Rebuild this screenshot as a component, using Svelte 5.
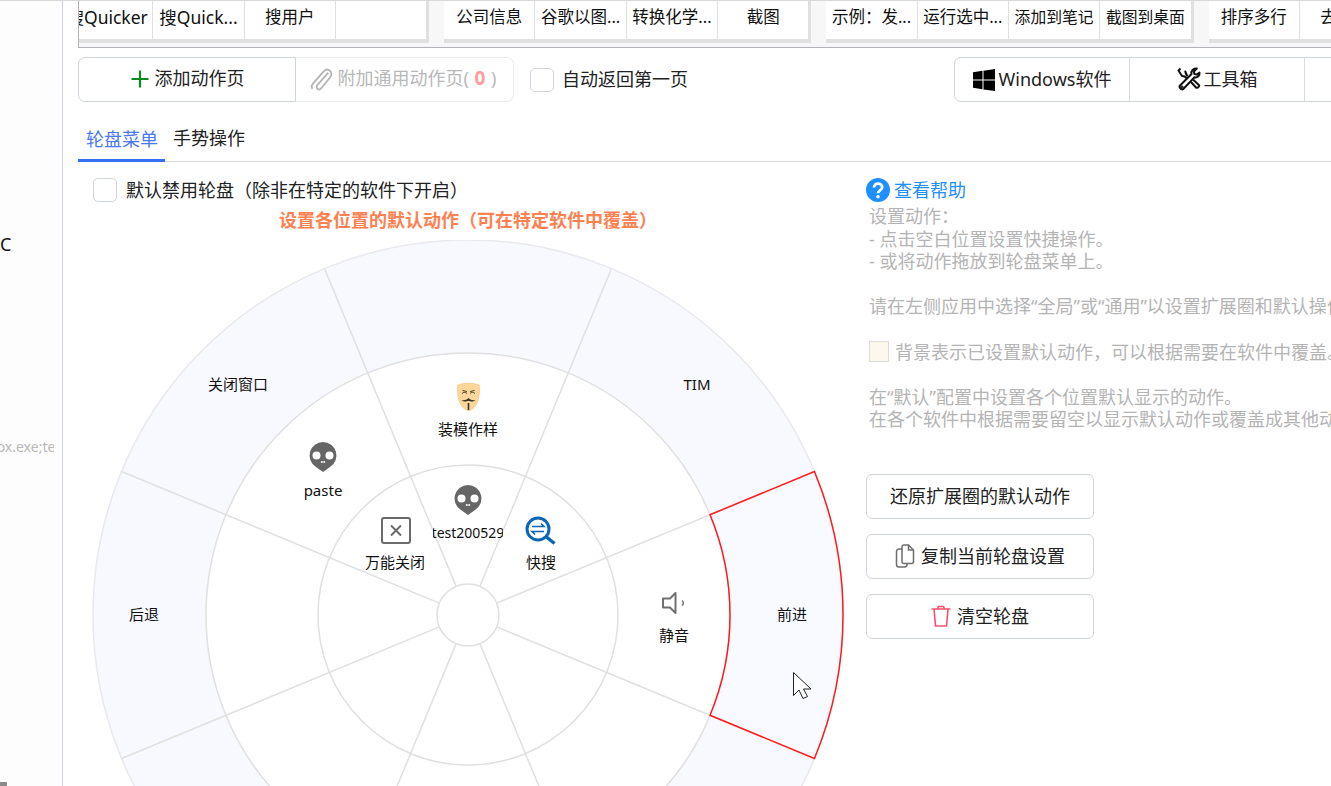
<script lang="ts">
  const groups = [
    ['搜Quicker', '搜Quick...', '搜用户', ''],
    ['公司信息', '谷歌以图...', '转换化学...', '截图'],
    ['示例：发...', '运行选中...', '添加到笔记', '截图到桌面'],
    ['排序多行', '去空行', '', '']
  ];

  const cx = 380;
  const cy = 375;
  const R = [31, 150, 262, 375];

  const polar = (r: number, deg: number) => {
    const a = (deg * Math.PI) / 180;
    return [+(cx + r * Math.cos(a)).toFixed(2), +(cy + r * Math.sin(a)).toFixed(2)];
  };

  // wheel has 8 slices, spokes sit at 22.5deg + n * 45deg
  const spokes = Array.from({ length: 8 }, (_, i) => {
    const deg = 22.5 + i * 45;
    return { from: polar(R[0], deg), to: polar(R[3], deg) };
  });

  const [a1x, a1y] = polar(R[3], -22.5);
  const [a2x, a2y] = polar(R[3], 22.5);
  const [b1x, b1y] = polar(R[2], 22.5);
  const [b2x, b2y] = polar(R[2], -22.5);
  const activeSlice = `M${a1x} ${a1y}A${R[3]} ${R[3]} 0 0 1 ${a2x} ${a2y}L${b1x} ${b1y}A${R[2]} ${R[2]} 0 0 0 ${b2x} ${b2y}Z`;

  // label centres, wheel canvas starts at page x=88 y=240
  const labels = [
    { t: '关闭窗口', x: 150, y: 144 },
    { t: 'TIM', x: 609, y: 144 },
    { t: '后退', x: 56, y: 374 },
    { t: '前进', x: 704, y: 374 },
    { t: '装模作样', x: 380, y: 188.500 },
    { t: 'paste', x: 235, y: 250 },
    { t: '万能关闭', x: 307, y: 322 },
    { t: '快搜', x: 453, y: 322 },
    { t: '静音', x: 586, y: 395 }
  ];
</script>

<div class="app">
  <aside class="side">
    <div class="side-clip">
      <div class="side-pc">PC</div>
      <div class="side-exe">firefox.exe;test.exe</div>
    </div>
    <div class="side-thumb"></div>
  </aside>

  <main class="main">
    <div class="table">
      <div class="table-inner">
        {#each groups as cells}
          <div class="group">
            {#each cells as cell}
              <div class="cell" class:latin={cell.includes('Quick')} class:long={cell.length === 5}>{cell}</div>
            {/each}
          </div>
        {/each}
      </div>
    </div>

    <div class="toolbar">
      <div class="attach">
        <button class="att-btn att-add">
          <svg width="20" height="20" viewBox="0 0 20 20"><path d="M10 1.500V18.500M1.500 10H18.500" stroke="#0c8a1e" stroke-width="2.200" fill="none" /></svg>
          添加动作页
        </button>
        <button class="att-btn att-common">
          <svg width="22" height="25" viewBox="0 0 24 26" fill="none" stroke="#b4b4b4" stroke-width="2"><path d="M20 5.500 8 19c-1.500 1.800-.6 3.600.4 4.300 1 .7 2.700.6 3.900-.8L22 10.500c2.100-2.500 1.500-5.400-.3-7-1.900-1.600-4.700-1.700-6.700.6L3.400 17.200c-1.900 2.300-1.900 4.500-.8 6" /></svg>
          <span>附加通用动作页( <b>0</b> )</span>
        </button>
      </div>

      <label class="check"><span class="box"></span><span class="txt txt-bar">自动返回第一页</span></label>

      <div class="seg">
        <div class="seg-cell seg-win">
          <svg width="22" height="22" viewBox="0 0 22 22" fill="#000"><path d="M0 3.200 9.500 1.800V10.400H0ZM10.500 1.700 22 0V10.400H10.500ZM0 11.500H9.500V20.200L0 18.800ZM10.500 11.500H22V22L10.500 20.400Z" /></svg>
          <span class="txt txt-bar">Windows软件</span>
        </div>
        <div class="seg-cell seg-tools">
          <svg width="24" height="25" viewBox="0 0 24 25" fill="none" stroke="#111" stroke-width="2" stroke-linejoin="round"><path d="M3.500 1.500 1.500 3.500l3.500 5.500 2.800.5 2.400 2.500M14 15l5 5.500c1.200 1.300 4-1.300 2.800-2.600L16 12.500M10 8.500 8.800 6.500 8.300 4.500Z" /><path d="M22.500 5.500c.5 3-1.800 5.500-5 4.800L6.300 22c-1.400 1.500-5-1.800-3.500-3.300L14.500 7c-.7-3.200 1.800-6 5.300-5.400l-3 3 .6 2.400 2.400.6Z" /><circle cx="5" cy="20" r=".6" /></svg>
          <span class="txt txt-bar">工具箱</span>
        </div>
        <div class="seg-cell"></div>
      </div>
    </div>

    <div class="tabs">
      <div class="tab tab-on">轮盘菜单</div>
      <div class="tab">手势操作</div>
    </div>

    <div class="body">
      <section class="left">
        <label class="check check-wheel"><span class="box"></span><span class="txt">默认禁用轮盘（除非在特定的软件下开启）</span></label>
        <h2 class="title">设置各位置的默认动作（可在特定软件中覆盖）</h2>

        <svg class="wheel" width="760" height="760" viewBox="0 0 760 760">
          <defs>
            <clipPath id="test-clip"><rect x="345" y="280" width="70" height="24" /></clipPath>
          </defs>
          <circle cx={cx} cy={cy} r={R[3]} fill="#f8f9fe" stroke="#e8e8ee" stroke-width="1.500" />
          <circle cx={cx} cy={cy} r={R[2]} fill="#fff" stroke="#e0e0e0" stroke-width="1.500" />
          <circle cx={cx} cy={cy} r={R[1]} fill="#fff" stroke="#e0e0e0" stroke-width="1.500" />
          {#each spokes as s}
            <line x1={s.from[0]} y1={s.from[1]} x2={s.to[0]} y2={s.to[1]} stroke="#e0e0e0" stroke-width="1.500" />
          {/each}
          <circle cx={cx} cy={cy} r={R[0]} fill="#fff" stroke="#e0e0e0" stroke-width="1.500" />
          <path d={activeSlice} fill="#f9faff" stroke="#ff1a1a" stroke-width="1.500" />

          {#each labels as l}
            <text x={l.x} y={l.y} class="lbl">{l.t}</text>
          {/each}
          <g clip-path="url(#test-clip)"><text x="380" y="292.500" class="lbl lbl-test">test200529</text></g>

          <!-- skull, paste -->
          <g transform="translate(221 202)">
            <path d="M14 0a13.500 13.500 0 0 1 7 25l-7 5-7-5A13.500 13.500 0 0 1 14 0Z" fill="#666" />
            <circle cx="7.500" cy="13.500" r="4" fill="#fff" /><circle cx="20.500" cy="13.500" r="4" fill="#fff" />
            <circle cx="12.800" cy="20" r="1" fill="#fff" /><circle cx="15.200" cy="20" r="1" fill="#fff" />
          </g>
          <!-- skull, test200529 -->
          <g transform="translate(366 245)">
            <path d="M14 0a13.500 13.500 0 0 1 7 25l-7 5-7-5A13.500 13.500 0 0 1 14 0Z" fill="#666" />
            <circle cx="7.500" cy="13.500" r="4" fill="#fff" /><circle cx="20.500" cy="13.500" r="4" fill="#fff" />
            <circle cx="12.800" cy="20" r="1" fill="#fff" /><circle cx="15.200" cy="20" r="1" fill="#fff" />
          </g>
          <!-- mask -->
          <g transform="translate(369 143)">
            <path d="M.8 2c6-2.200 15.400-2.200 21.400 0 .8 9 0 18-6.700 24-2.500 2-5.500 2-8 0C1 20 0 11 .8 2Z" fill="#fcd79c" stroke="#f8c680" stroke-width=".8" />
            <path d="M5 10.500c1.500-1.500 3.500-1.500 5 0M13 10.500c1.500-1.500 3.500-1.500 5 0M5.500 7.500l4.500 1M17.500 7.500l-4.500 1" stroke="#4a3c28" stroke-width="1" fill="none" />
            <path d="M4.500 17c3 .8 5-.2 7-2 2 1.800 4 2.800 7 2-2 2-5 2-7 .8-2 1.200-5 1.200-7-.8Z" fill="#3c3020" />
            <rect x="10.700" y="20" width="1.600" height="7" fill="#3c3020" />
          </g>
          <!-- close box -->
          <g transform="translate(293 277)" fill="none" stroke="#6a6a6a">
            <rect x="1" y="1" width="28" height="25" rx="2" stroke-width="2" />
            <path d="M10 8.500 20 18.500M20 8.500 10 18.500" stroke-width="2" />
          </g>
          <!-- quick search -->
          <g transform="translate(438 276)" fill="none" stroke="#0b66b3">
            <circle cx="12" cy="13" r="11" stroke-width="3" />
            <path d="M20.500 21 28.500 27.500" stroke-width="3.500" />
            <path d="M6 10.500H18L15 7.500M18 15.500H6L9 18.500" stroke-width="1.600" />
          </g>
          <!-- speaker -->
          <g transform="translate(574 352)" fill="none" stroke="#707070" stroke-width="2">
            <path d="M1 6.500H8L13.500 1V21L8 15.500H1Z" stroke-linejoin="round" />
            <path d="M20 8.500c1.800 1.200 1.800 3.800 0 5" stroke-width="1.500" />
          </g>
          <!-- pointer -->
          <path d="M705.500 432.500V455.500L711 450 715 458.500 719.500 456.500 715.500 449H723Z" fill="#fff" stroke="#222" stroke-width="1" />
        </svg>
      </section>

      <section class="right">
        <div class="help">
          <svg width="24" height="24" viewBox="0 0 24 24"><circle cx="12" cy="12" r="12" fill="#1e8fff" /><path d="M8 9.500c0-5.200 8.200-5 8.200-.2 0 3.200-4.200 3-4.200 6" fill="none" stroke="#fff" stroke-width="2.800" /><circle cx="12" cy="18.800" r="1.800" fill="#fff" /></svg>
          <span class="txt">查看帮助</span>
        </div>
        <div class="notes">
          <p>设置动作：</p>
          <p>- 点击空白位置设置快捷操作。</p>
          <p>- 或将动作拖放到轮盘菜单上。</p>
          <p>&nbsp;</p>
          <p>请在左侧应用中选择“全局”或“通用”以设置扩展圈和默认操作。</p>
          <p>&nbsp;</p>
          <p class="legend"><span class="swatch"></span><span>背景表示已设置默认动作，可以根据需要在软件中覆盖。</span></p>
          <p>&nbsp;</p>
          <p>在“默认”配置中设置各个位置默认显示的动作。</p>
          <p>在各个软件中根据需要留空以显示默认动作或覆盖成其他动作。</p>
        </div>
        <div class="actions">
          <button class="act"><span class="txt">还原扩展圈的默认动作</span></button>
          <button class="act">
            <svg width="20" height="24" viewBox="0 0 20 24" fill="none" stroke="#6e6e6e" stroke-width="1.500"><path d="M7 5H4a2.500 2.500 0 0 0-2.500 2.500V20.500A2.500 2.500 0 0 0 4 23H9.500A2.500 2.500 0 0 0 12 20.500V19.500" /><path d="M7 3a2 2 0 0 1 2-2H13.500L18.500 6V17.500a2 2 0 0 1-2 2H9a2 2 0 0 1-2-2Z" /><path d="M13.500 1V6H18.500" /></svg>
            <span class="txt">复制当前轮盘设置</span>
          </button>
          <button class="act">
            <svg width="20" height="22" viewBox="0 0 20 22" fill="none" stroke="#f5506e" stroke-width="1.600"><path d="M.5 4H19.500M6.500 4 7.500 1.500H12.500L13.500 4M3 4 4.500 21H15.500L17 4" /></svg>
            <span class="txt">清空轮盘</span>
          </button>
        </div>
      </section>
    </div>
  </main>
</div>

<style>
  :global(body) {
    background: #fff;
  }

  .app {
    display: flex;
    width: 1331px;
    height: 786px;
    overflow: hidden;
    border-top: 1px solid #d8d8d8;
    box-sizing: border-box;
    font-family: 'Noto Sans', 'Noto Sans CJK SC', sans-serif;
    font-size: 18px;
    color: #222;
    white-space: nowrap;
  }

  button {
    font: inherit;
    color: inherit;
    background: #fff;
    padding: 0;
  }

  /* Noto sits a little low compared with the original font */
  .txt {
    margin-bottom: 2px;
  }
  .txt-bar {
    margin-bottom: 4px;
  }

  /* ── left app list, only slivers are in view ── */
  .side {
    flex: 0 0 62px;
    display: flex;
    flex-direction: column;
    justify-content: space-between;
    border-right: 1.5px solid #ccd2da;
    background: #fdfdfd;
  }
  .side-clip {
    width: 54px;
    overflow: hidden;
  }
  .side-pc {
    margin: 231px 0 0 -11px;
    line-height: 24px;
    color: #111;
  }
  .side-exe {
    margin: 181px 0 0 -30px;
    line-height: 20px;
    font-size: 14px;
    color: #b8b8b8;
  }
  .side-thumb {
    width: 7px;
    height: 4px;
    background: #8a8a8a;
  }

  .main {
    flex: 1;
    min-width: 0;
    padding-left: 15px;
    overflow: hidden;
  }

  /* ── action grid strip at the top ── */
  .table {
    height: 47px;
    box-sizing: border-box;
    border-left: 1.5px solid #b2b2b8;
    border-bottom: 1.5px solid #b2b2b8;
    background: #f7f7f7;
    padding-left: 3px;
    overflow: hidden;
  }
  .table-inner {
    display: flex;
    gap: 15px;
    margin-left: -20px;
  }
  .group {
    flex: none;
    display: flex;
    background: #e0e0e0;
    padding: 0 2px 4px 0;
    height: 38px;
  }
  .cell {
    width: 90.300px;
    height: 38px;
    margin-right: 1px;
    background: #fff;
    text-align: center;
    font-size: 16.500px;
    line-height: 32px;
    color: #111;
    overflow: hidden;
  }
  .latin {
    font-size: 17.500px;
  }
  .long {
    font-size: 15.800px;
  }

  .toolbar {
    display: grid;
    grid-template-columns: 452px 424px 500px;
    align-items: center;
    margin-top: 9px;
    height: 45px;
  }
  .attach {
    display: flex;
    width: 436px;
    height: 45px;
  }
  .att-btn {
    display: flex;
    align-items: center;
    justify-content: center;
    gap: 5px;
    box-sizing: border-box;
    height: 45px;
    padding-bottom: 4px;
  }
  .att-btn svg {
    margin-bottom: -4px;
  }
  .att-add {
    width: 218px;
    border: 1.5px solid #d0d4dc;
    border-radius: 7px 0 0 7px;
    padding-bottom: 5px;
  }
  .att-common {
    width: 218px;
    gap: 5px;
    padding-right: 2px;
    color: #b8b8b8;
    border: 1.5px solid #e8ebf0;
    border-left: none;
    border-radius: 0 7px 7px 0;
  }
  .att-common b {
    margin: 0 1px;
    font-size: 19px;
    font-weight: 700;
    color: #ff9c9c;
  }

  .check {
    display: flex;
    align-items: center;
    gap: 8px;
  }
  .box {
    display: block;
    box-sizing: border-box;
    width: 24px;
    height: 24px;
    border: 1.5px solid #d0d4dc;
    border-radius: 5px;
    background: #fff;
  }

  .seg {
    display: flex;
    height: 45px;
    box-sizing: border-box;
    border: 1.5px solid #d0d4dc;
    border-radius: 7px 0 0 7px;
  }
  .seg-cell {
    display: flex;
    flex: none;
    align-items: center;
    justify-content: center;
    gap: 4px;
    width: 174px;
    border-right: 1.5px solid #d8dbe2;
  }
  .seg-tools {
    gap: 3px;
  }

  .tabs {
    display: flex;
    height: 59px;
    align-items: flex-end;
    border-bottom: 1.5px solid #d4d6dc;
  }
  .tab {
    box-sizing: border-box;
    height: 38px;
    padding: 0 7px 0 8px;
    line-height: 30px;
  }
  .tab-on {
    color: #4a78f0;
    border-bottom: 3.500px solid #3a6ef0;
    margin-bottom: -1px;
  }

  .body {
    display: flex;
    padding-top: 16px;
  }
  .left {
    flex: 0 0 780px;
    margin-right: 8px;
  }
  .check-wheel {
    padding-left: 15px;
    gap: 9px;
    height: 24px;
  }
  .title {
    margin: 6px 0 0;
    height: 24px;
    text-align: center;
    font-size: 18px;
    line-height: 24px;
    font-weight: 700;
    color: #ff8050;
  }
  .wheel {
    display: block;
    margin: 8px 0 0 10px;
  }
  .lbl {
    font-size: 15px;
    fill: #111;
    text-anchor: middle;
    dominant-baseline: central;
  }
  .lbl-test {
    font-size: 14px;
  }

  .right {
    flex: none;
  }
  .help {
    display: flex;
    align-items: center;
    gap: 4px;
    height: 24px;
    color: #1e8fff;
  }
  .notes {
    margin: 3px 0 0 3px;
    color: #b4b4b4;
    line-height: 22.600px;
  }
  .notes p {
    margin: 0;
  }
  .legend {
    display: flex;
    align-items: center;
    gap: 6px;
  }
  .swatch {
    box-sizing: border-box;
    width: 20px;
    height: 21px;
    background: #fdf8ee;
    border: 1.500px solid #dcdcdc;
  }
  .actions {
    display: flex;
    flex-direction: column;
    gap: 15px;
    margin-top: 43px;
  }
  .act {
    display: flex;
    align-items: center;
    justify-content: center;
    gap: 6px;
    box-sizing: border-box;
    width: 228px;
    height: 45px;
    border: 1.5px solid #d0d4dc;
    border-radius: 6px;
  }
</style>
